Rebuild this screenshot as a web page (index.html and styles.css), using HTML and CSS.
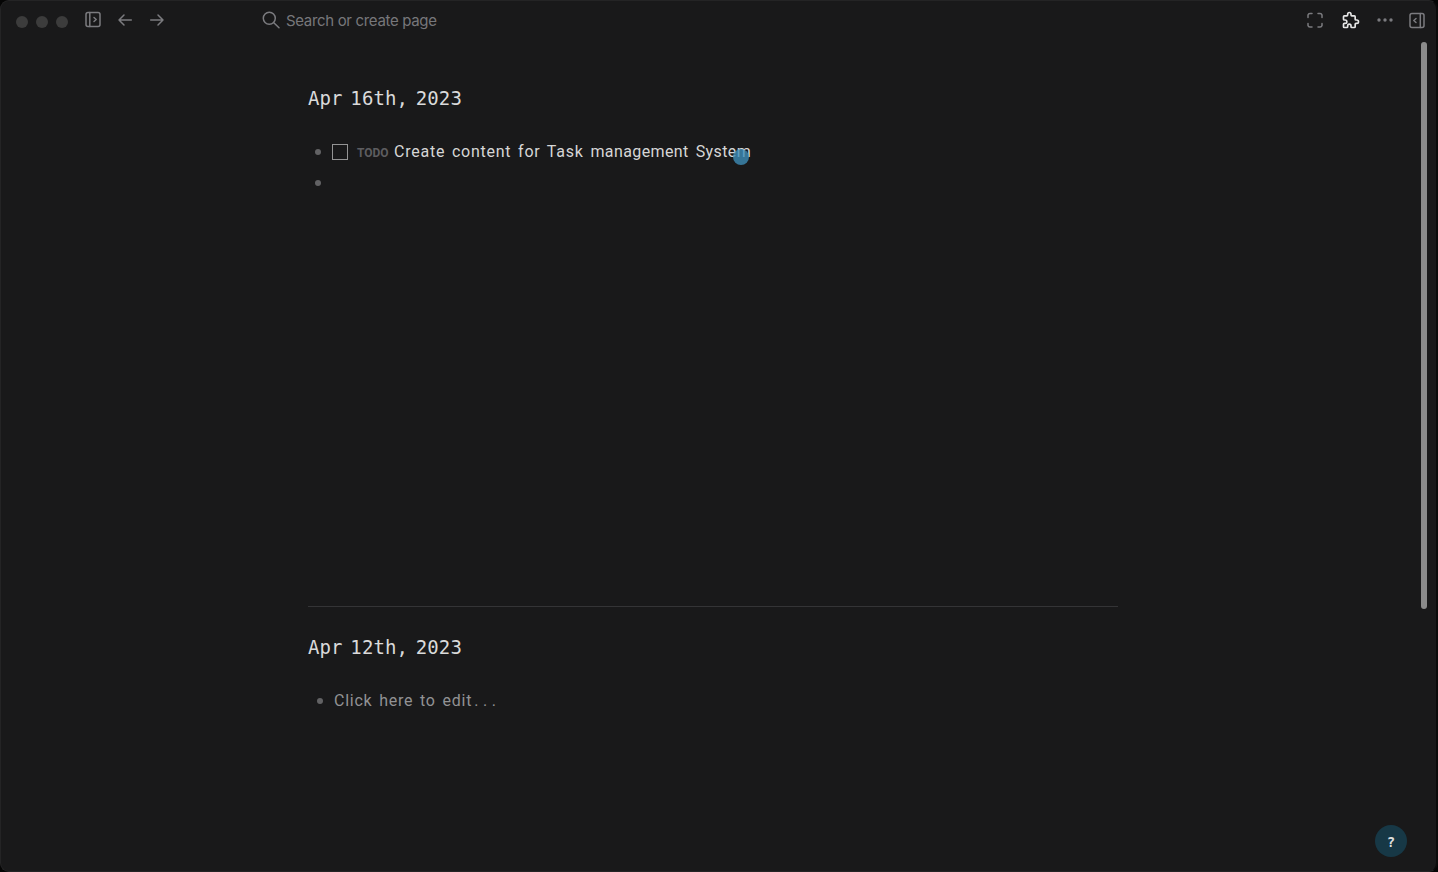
FILE: index.html
```html
<!DOCTYPE html>
<html lang="en">
<head>
<meta charset="utf-8">
<title>Journals</title>
<link rel="stylesheet" href="styles.css">
</head>
<body>
<div class="window">
  <header class="topbar">
    <div class="lights"><i></i><i></i><i></i></div>
    <nav class="nav">
      <svg class="icon" viewBox="0 0 20 20"><rect x="3" y="2.500" width="14" height="14" rx="2"/><path d="M6.800 2.500v14M11 7.500l2.200 2-2.200 2"/></svg>
      <svg class="icon" viewBox="0 0 20 20"><path d="M16.300 10H4M9 5l-5 5 5 5"/></svg>
      <svg class="icon" viewBox="0 0 20 20"><path d="M3.700 10H16M11 5l5 5-5 5"/></svg>
    </nav>
    <div class="search">
      <svg class="icon" viewBox="0 0 20 20"><circle cx="8.300" cy="8.300" r="6"/><path d="M12.800 12.800l5.200 5"/></svg>
      <span>Search or create page</span>
    </div>
    <div class="tools">
      <svg class="icon" viewBox="0 0 20 20"><path d="M3 7.500V5a2 2 0 0 1 2-1.500h2M13 3.500h2a2 2 0 0 1 2 1.500v2.500M17 13.500v2a2 2 0 0 1-2 1.500h-2M7 17H5a2 2 0 0 1-2-1.500v-2"/></svg>
      <svg class="icon puzzle" viewBox="0 0 24 24"><path d="M4 7h3a1 1 0 0 0 1-1V5a2 2 0 0 1 4 0v1a1 1 0 0 0 1 1h3a1 1 0 0 1 1 1v3a1 1 0 0 0 1 1h1a2 2 0 0 1 0 4h-1a1 1 0 0 0-1 1v3a1 1 0 0 1-1 1h-3a1 1 0 0 1-1-1v-1a2 2 0 0 0-4 0v1a1 1 0 0 1-1 1H4a1 1 0 0 1-1-1v-3a1 1 0 0 1 1-1h1a2 2 0 0 0 0-4H4a1 1 0 0 1-1-1V8a1 1 0 0 1 1-1"/></svg>
      <svg class="icon dots" viewBox="0 0 20 20"><circle cx="4" cy="10" r="1.700"/><circle cx="10" cy="10" r="1.700"/><circle cx="16" cy="10" r="1.700"/></svg>
      <svg class="icon" viewBox="0 0 20 20"><rect x="3" y="3.500" width="14" height="14" rx="2"/><path d="M13.300 3.500v14M9 8.500l-2.200 2 2.200 2"/></svg>
    </div>
  </header>
  <main class="journals">
    <section class="day today">
      <h1>Apr 16th, 2023</h1>
      <div class="block"><b class="bullet"></b><span class="check"></span><span class="todo">TODO</span><span class="text">Create content for Task <span class="tight">management System</span></span></div>
      <div class="block"><b class="bullet"></b></div>
    </section>
    <section class="day">
      <h1>Apr 12th, 2023</h1>
      <div class="block empty"><b class="bullet"></b><span class="text hint">Click here to edit<span class="loose">...</span></span></div>
    </section>
  </main>
  <div class="pointer"></div>
  <div class="scrollbar"></div>
  <button class="help">?</button>
</div>
</body>
</html>
```
FILE: styles.css
```css
* { box-sizing: border-box; }
body { margin: 0; background: #050505; overflow: hidden; }
.window {
  position: relative; width: 1438px; height: 872px;
  background: #19191a; border-radius: 9px;
  border: 1px solid #242425; border-right: 2px solid #0b0b0b;
  font-family: Roboto, sans-serif;
}
.topbar { display: flex; align-items: center; height: 38px; padding-left: 15px; }
.lights { display: flex; gap: 8px; padding-top: 4px; }
.lights i { width: 12px; height: 12px; border-radius: 50%; background: #3c3c3c; }
.icon { display: block; width: 20px; height: 20px; flex: none; fill: none; stroke: #7b7b7f; stroke-width: 1.5; stroke-linecap: round; stroke-linejoin: round; }
.nav { display: flex; gap: 12px; margin-left: 15px; }
.search { display: flex; align-items: center; gap: 5px; margin-left: 94px; }
.search span { margin-top: 2px; font: 15px/20px Inter, sans-serif; letter-spacing: -0.33px; color: #77777a; white-space: nowrap; }
.tools { display: flex; align-items: center; gap: 15px; margin-left: auto; padding-right: 9px; }
.tools .puzzle { margin: 0 -1px 0 1px; stroke: #e6e6e6; stroke-width: 2; }
.tools .dots { fill: #7b7b7f; stroke: none; }
.tools .icon:last-child { margin-left: -3px; }
.journals { width: 810px; margin-left: 307px; padding-top: 43px; }
.day h1 { margin: 0 0 22px; font: 19px/32px "DejaVu Sans Mono", monospace; letter-spacing: 0.1px; word-spacing: -3.8px; color: #dadada; }
.today { height: 525px; margin-bottom: 24px; border-bottom: 1px solid #343436; }
.block { display: flex; align-items: center; height: 31px; padding-left: 7px; }
.bullet { width: 6px; height: 6px; border-radius: 50%; background: #626264; }
.check { width: 16px; height: 16px; margin-left: 11px; border: 1px solid #949494; }
.todo { margin: 2px 0 0 9px; width: 37px; font: 700 12px/20px Roboto, sans-serif; color: #5d5d60; }
.text { font-size: 16px; line-height: 24px; letter-spacing: 0.76px; word-spacing: 2px; color: #d6d6d6; white-space: nowrap; }
.tight { letter-spacing: 0.4px; word-spacing: 2.6px; }
.loose { letter-spacing: 4.6px; margin-left: 2px; }
.empty { padding-left: 9px; }
.hint { margin-left: 11px; color: #929294; }
.pointer { position: absolute; left: 732px; top: 148px; width: 16px; height: 16px; border-radius: 50%; background: #3f8fbb; opacity: .78; }
.scrollbar { position: absolute; left: 1420px; top: 41px; width: 6px; height: 567px; border-radius: 3px; background: #8b8b8b; }
.help { position: absolute; left: 1374px; top: 824px; width: 32px; height: 32px; padding: 0; border: 0; border-radius: 50%; background: #173846; color: #dedede; font: 700 14px/34px "DejaVu Sans Mono", monospace; }
```
